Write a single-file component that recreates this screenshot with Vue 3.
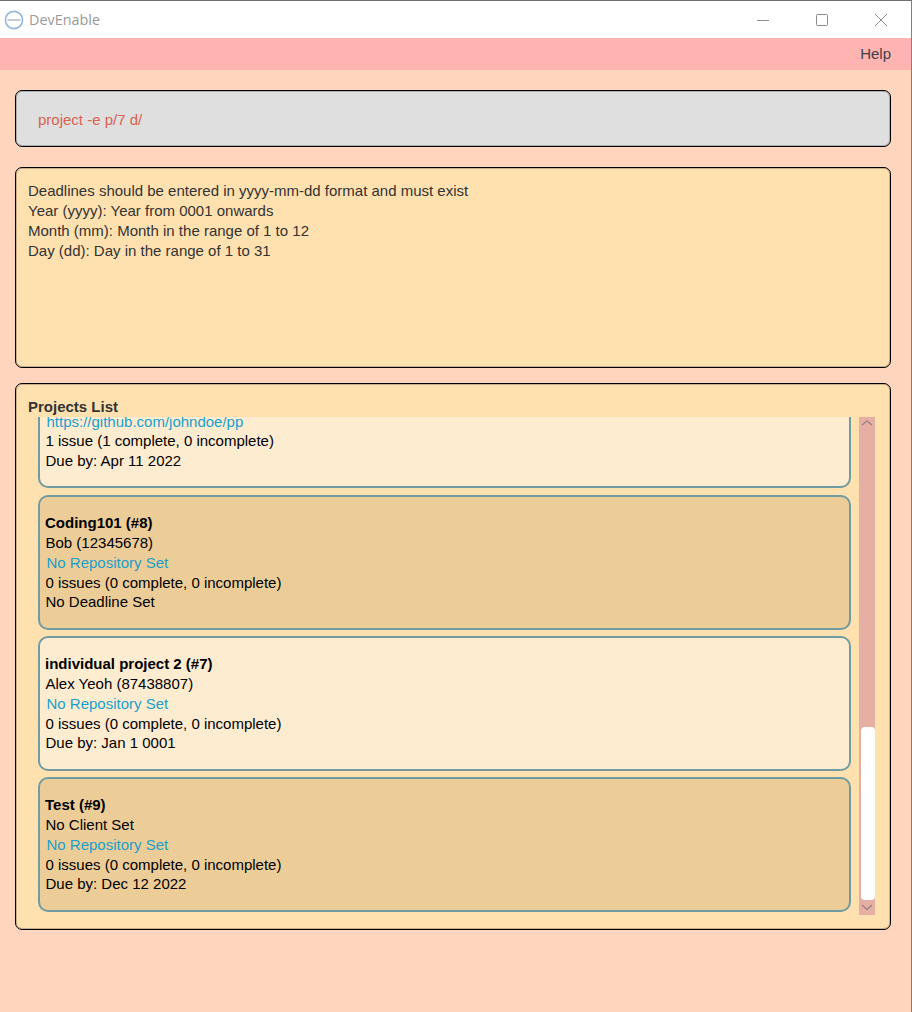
<script setup>
const messageLines = [
  'Deadlines should be entered in yyyy-mm-dd format and must exist',
  'Year (yyyy): Year from 0001 onwards',
  'Month (mm): Month in the range of 1 to 12',
  'Day (dd): Day in the range of 1 to 31'
]
const projects = [
  { title: 'Coding101 (#8)', client: 'Bob (12345678)', repo: 'No Repository Set', issues: '0 issues (0 complete, 0 incomplete)', due: 'No Deadline Set', dark: true },
  { title: 'individual project 2 (#7)', client: 'Alex Yeoh (87438807)', repo: 'No Repository Set', issues: '0 issues (0 complete, 0 incomplete)', due: 'Due by: Jan 1 0001', dark: false },
  { title: 'Test (#9)', client: 'No Client Set', repo: 'No Repository Set', issues: '0 issues (0 complete, 0 incomplete)', due: 'Due by: Dec 12 2022', dark: true }
]
</script>

<template>
  <div class="window">
    <header class="titlebar">
      <div class="brand">
        <svg class="logo" width="20" height="20" viewBox="0 0 20 20">
          <circle cx="10" cy="10" r="8.6" fill="#fff" stroke="#94b6dc" stroke-width="1.6" />
          <line x1="3.5" y1="10" x2="16.5" y2="10" stroke="#8a96a6" stroke-width="1" />
        </svg>
        <span class="app-name">DevEnable</span>
      </div>
      <div class="controls">
        <svg width="14" height="14" viewBox="0 0 14 14"><line x1="1" y1="7.5" x2="13" y2="7.5" stroke="#8c8c8c" stroke-width="1" /></svg>
        <svg width="14" height="14" viewBox="0 0 14 14"><rect x="1.5" y="1.5" width="11" height="11" rx="1" fill="none" stroke="#8c8c8c" stroke-width="1" /></svg>
        <svg width="14" height="14" viewBox="0 0 14 14"><path d="M1 1 L13 13 M13 1 L1 13" fill="none" stroke="#8c8c8c" stroke-width="1" /></svg>
      </div>
    </header>

    <nav class="menubar"><span>Help</span></nav>

    <main class="content">
      <section class="box command">project -e p/7 d/</section>

      <section class="box message">
        <div v-for="line in messageLines" :key="line">{{ line }}</div>
      </section>

      <section class="box list">
        <h2 class="list-title">Projects List</h2>
        <div class="list-body">
          <div class="viewport">
            <article class="card partial">
              <div class="repo">https://github.com/johndoe/pp</div>
              <div>1 issue (1 complete, 0 incomplete)</div>
              <div>Due by: Apr 11 2022</div>
            </article>
            <article v-for="p in projects" :key="p.title" class="card" :class="{ dark: p.dark }">
              <div class="title">{{ p.title }}</div>
              <div>{{ p.client }}</div>
              <div class="repo">{{ p.repo }}</div>
              <div>{{ p.issues }}</div>
              <div>{{ p.due }}</div>
            </article>
          </div>
          <div class="scrollbar">
            <svg width="16" height="12" viewBox="0 0 16 12"><path d="M3 8 L8 4 L13 8" fill="none" stroke="#8f8080" stroke-width="1.2" /></svg>
            <div class="track"><div class="thumb"></div></div>
            <svg width="16" height="15" viewBox="0 0 16 15"><path d="M3 5 L8 9.5 L13 5" fill="none" stroke="#8f8080" stroke-width="1.2" /></svg>
          </div>
        </div>
      </section>
    </main>
  </div>
</template>

<style>
html, body { margin: 0; padding: 0; }
</style>

<style scoped>
.window {
  width: 912px;
  height: 1012px;
  box-sizing: border-box;
  border-top: 1px solid #707070;
  border-right: 1px solid #808080;
  background: #ffd5bd;
  font-family: "Liberation Sans", Arial, sans-serif;
  font-size: 15px;
  line-height: 20px;
  color: #333;
  display: flex;
  flex-direction: column;
  overflow: hidden;
}
.titlebar {
  height: 37px;
  background: #fff;
  display: flex;
  align-items: center;
  justify-content: space-between;
  flex: none;
}
.brand { display: flex; align-items: center; padding-left: 4px; gap: 5px; }
.logo { display: block; }
.app-name {
  font-family: "Open Sans", sans-serif;
  font-size: 14.4px;
  color: #9a9a9a;
}
.controls { display: flex; gap: 45px; padding-right: 23px; }
.controls svg { display: block; }
.menubar {
  height: 32px;
  background: #ffb4b1;
  flex: none;
  display: flex;
  align-items: center;
  justify-content: flex-end;
  padding-right: 20px;
  color: #3f3f46;
}
.content {
  padding: 20px 20px 0 15px;
  display: flex;
  flex-direction: column;
}
.box {
  box-sizing: border-box;
  width: 876px;
  border: 1px solid #000;
  border-radius: 7px;
  box-shadow: inset 0 0 0 1px rgba(0, 0, 0, 0.22);
}
.command {
  height: 57px;
  background: #dfdfdf;
  color: #d8634f;
  padding: 19px 22px;
}
.message {
  height: 201px;
  margin-top: 20px;
  background: #ffe1b0;
  padding: 13px 12px;
}
.list {
  height: 547px;
  margin-top: 15px;
  background: #ffe1b0;
  padding: 13px 15px 0 12px;
}
.list-title {
  margin: 0;
  font-size: 15px;
  line-height: 20px;
  font-weight: 700;
  color: #333;
}
.list-body {
  display: flex;
  height: 498px;
}
.viewport {
  width: 813px;
  margin-left: 10px;
  height: 498px;
  padding-bottom: 3px;
  box-sizing: border-box;
  display: flex;
  flex-direction: column;
  justify-content: flex-end;
  gap: 6px;
  overflow: hidden;
}
.card {
  flex: none;
  box-sizing: border-box;
  height: 135px;
  border: 2px solid #6f9ba1;
  border-radius: 10px;
  background: #feecd0;
  padding: 16px 5.5px 0;
  color: #000;
  line-height: 19.6px;
}
.card.dark { background: #eccd98; }
.card.partial {
  height: 79px;
  margin-bottom: 1px;
  padding-top: 2.5px;
  border-top-left-radius: 0;
  border-top-right-radius: 0;
  border-top: none;
}
.title { font-weight: 700; margin-left: -0.5px; }
.repo { color: #1a9fcc; padding-left: 1px; margin-top: 1px; }
.partial .repo { margin-top: 0; }
.scrollbar {
  width: 16px;
  height: 498px;
  margin-left: 8px;
  background: #e6afa3;
  display: flex;
  flex-direction: column;
}
.scrollbar svg { display: block; flex: none; }
.track {
  flex: 1;
  display: flex;
  flex-direction: column;
  justify-content: flex-end;
  padding-left: 2px;
}
.thumb {
  height: 173px;
  background: #fff;
  border-radius: 4px;
}
</style>
